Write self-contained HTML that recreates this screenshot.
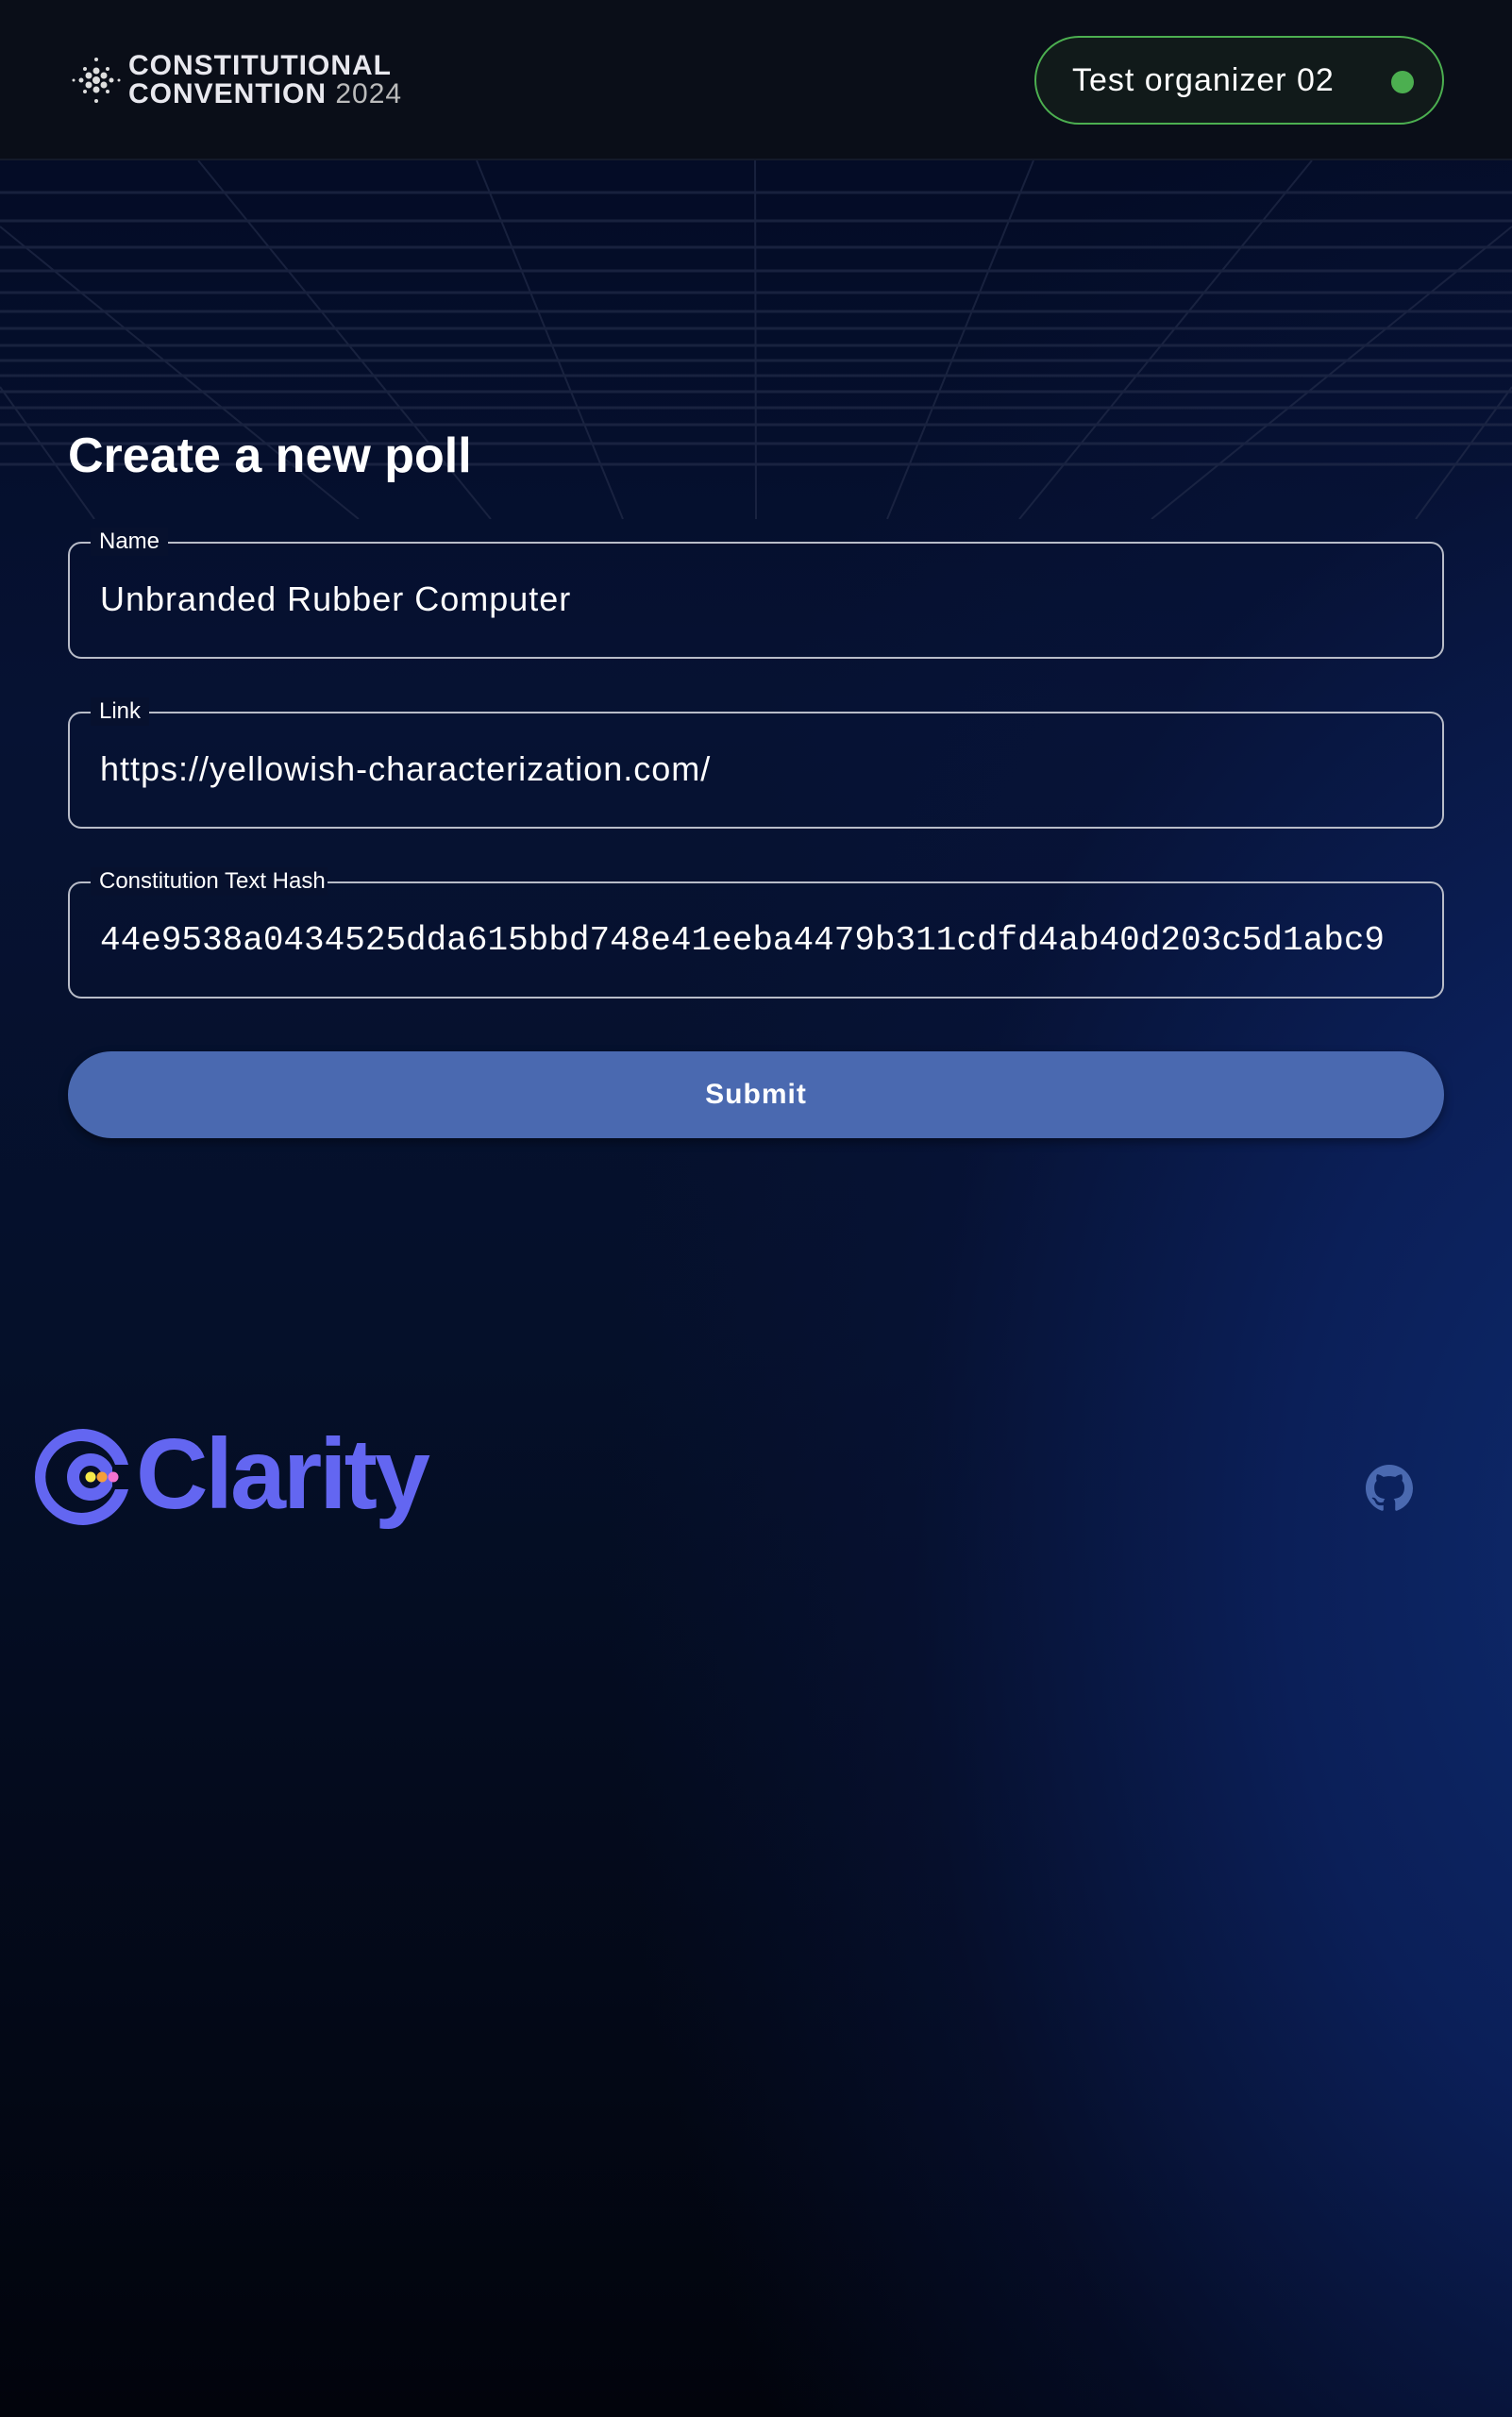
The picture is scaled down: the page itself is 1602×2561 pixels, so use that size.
<!DOCTYPE html>
<html><head><meta charset="utf-8"><style>
*{margin:0;padding:0;box-sizing:border-box}
html,body{width:1602px;height:2561px;overflow:hidden}
body{font-family:"Liberation Sans",sans-serif;color:#fff;position:relative;
background:
radial-gradient(ellipse 1300px 2000px at 1750px 1650px,#0e2a6c 0%,#0b1f58 30%,rgba(8,20,60,.5) 60%,rgba(5,10,30,0) 85%),
linear-gradient(180deg,#030a22 0%,#061233 30%,#05102a 55%,#02040c 100%);}
.hdr{position:absolute;left:0;top:0;width:1602px;height:170px;background:#0a0e18;border-bottom:2px solid #141a2a}
.grid{position:absolute;left:0;top:170px;width:1602px;height:380px;opacity:.55}
.logo{position:absolute;left:72px;top:55px}
.logo .t{position:absolute;left:64px;top:0;font-weight:bold;font-size:30px;line-height:30px;letter-spacing:1px;color:#e8e8ee;white-space:nowrap}
.logo .t span{font-weight:normal;color:#bbb}
.pill{position:absolute;left:1096px;top:38px;width:434px;height:94px;border:2px solid #4caf50;border-radius:47px;background:#111a1a;font-size:34px;line-height:90px;padding-left:38px;letter-spacing:1px}
.pill i{position:absolute;right:30px;top:35px;width:24px;height:24px;border-radius:50%;background:#4caf50}
h1{position:absolute;left:72px;top:453px;font-size:52px;font-weight:bold}
.f{position:absolute;left:72px;width:1458px;height:124px;border:2px solid #b8bcc8;border-radius:14px}
.f label{position:absolute;left:22px;top:-17px;font-size:24px;padding:0 9px;line-height:30px;background:#07112e}
.f div{position:absolute;left:32px;top:38px;font-size:36px;letter-spacing:1px;white-space:nowrap}
.f div.m{font-family:"Liberation Mono",monospace;letter-spacing:0;font-size:36px;top:40px}
.btn{position:absolute;left:72px;top:1114px;width:1458px;height:92px;border-radius:46px;background:#4a69b0;text-align:center;line-height:92px;font-size:30px;font-weight:bold;letter-spacing:1px;box-shadow:0 4px 10px rgba(0,0,0,.4)}
.cl{position:absolute;left:36px;top:1510px}
.cl .w{position:absolute;left:108px;top:-8px;font-size:106px;font-weight:bold;color:#6366f1;letter-spacing:-3px}
</style></head><body>
<div class="hdr">
<div class="logo">
<svg width="60" height="60" viewBox="0 0 60 60" style="position:absolute;left:0;top:0">
<g fill="#ddd"><circle cx="30" cy="30" r="4"/><circle cx="22" cy="25" r="3.5"/><circle cx="38" cy="25" r="3.5"/><circle cx="22" cy="35" r="3.5"/><circle cx="38" cy="35" r="3.5"/><circle cx="30" cy="20" r="3.5"/><circle cx="30" cy="40" r="3.5"/><circle cx="14" cy="30" r="2.5"/><circle cx="46" cy="30" r="2.5"/><circle cx="18" cy="18" r="2"/><circle cx="42" cy="18" r="2"/><circle cx="18" cy="42" r="2"/><circle cx="42" cy="42" r="2"/><circle cx="30" cy="8" r="2"/><circle cx="30" cy="52" r="2"/><circle cx="6" cy="30" r="1.5"/><circle cx="54" cy="30" r="1.5"/></g></svg>
<div class="t">CONSTITUTIONAL<br>CONVENTION <span>2024</span></div>
</div>
<div class="pill">Test organizer 02<i></i></div>
</div>
<svg class="grid" viewBox="0 0 1602 380" preserveAspectRatio="none">
<g stroke="#2a3350" stroke-width="3" fill="none">
<line x1="0" y1="34" x2="1602" y2="34"/><line x1="0" y1="64" x2="1602" y2="64"/><line x1="0" y1="92" x2="1602" y2="92"/><line x1="0" y1="117" x2="1602" y2="117"/><line x1="0" y1="140" x2="1602" y2="140"/><line x1="0" y1="160" x2="1602" y2="160"/><line x1="0" y1="178" x2="1602" y2="178"/><line x1="0" y1="196" x2="1602" y2="196"/><line x1="0" y1="212" x2="1602" y2="212"/><line x1="0" y1="228" x2="1602" y2="228"/><line x1="0" y1="245" x2="1602" y2="245"/><line x1="0" y1="262" x2="1602" y2="262"/><line x1="0" y1="280" x2="1602" y2="280"/><line x1="0" y1="300" x2="1602" y2="300"/><line x1="0" y1="322" x2="1602" y2="322"/>
</g>
<g stroke="#2a3350" stroke-width="2" fill="none">
<line x1="210" y1="0" x2="520" y2="380"/><line x1="505" y1="0" x2="660" y2="380"/><line x1="800" y1="0" x2="801" y2="380"/><line x1="1095" y1="0" x2="940" y2="380"/><line x1="1390" y1="0" x2="1080" y2="380"/><line x1="0" y1="70" x2="380" y2="380"/><line x1="1602" y1="70" x2="1220" y2="380"/><line x1="0" y1="240" x2="100" y2="380"/><line x1="1602" y1="240" x2="1500" y2="380"/>
</g></svg>
<h1>Create a new poll</h1>
<div class="f" style="top:574px"><label>Name</label><div>Unbranded Rubber Computer</div></div>
<div class="f" style="top:754px"><label>Link</label><div>https://yellowish-characterization.com/</div></div>
<div class="f" style="top:934px"><label style="padding-right:2px">Constitution Text Hash</label><div class="m">44e9538a0434525dda615bbd748e41eeba4479b311cdfd4ab40d203c5d1abc9</div></div>
<div class="btn">Submit</div>
<div class="cl">
<svg width="110" height="110" viewBox="0 0 110 110">
<path d="M52 4A51 51 0 1 0 52 106A51 51 0 0 0 100 68L86 68A38 38 0 1 1 86 42L100 42A51 51 0 0 0 52 4Z" fill="#6366f1"/>
<path d="M60 30A25 25 0 0 1 83 45L83 65A25 25 0 0 1 60 80A25 25 0 0 1 60 30Z" fill="#6366f1"/>
<circle cx="60" cy="55" r="12" fill="#070e28"/>
<circle cx="60" cy="55" r="5.5" fill="#f5e94a"/><circle cx="72" cy="55" r="5.5" fill="#f59e3a"/><circle cx="84" cy="55" r="5.5" fill="#f472d0"/>
</svg>
<div class="w">Clarity</div>
</div>
<svg style="position:absolute;left:1447px;top:1552px" width="50" height="50" viewBox="0 0 16 16"><path fill="#4a69b0" d="M8 0C3.580 0 0 3.58 0 8c0 3.54 2.29 6.53 5.47 7.59.4.07.55-.17.55-.38 0-.19-.01-.82-.01-1.49-2.01.37-2.530-.49-2.69-.94-.09-.23-.48-.94-.82-1.13-.28-.15-.68-.52-.01-.53.63-.01 1.08.58 1.23.82.72 1.21 1.870.87 2.33.66.07-.52.28-.87.51-1.07-1.78-.2-3.64-.89-3.64-3.95 0-.87.31-1.59.82-2.15-.08-.2-.36-1.02.08-2.12 0 0 .67-.21 2.2.82.64-.18 1.32-.27 2-.27.68 0 1.36.09 2 .27 1.53-1.04 2.2-.82 2.2-.82.44 1.1.16 1.92.08 2.12.51.56.82 1.27.82 2.15 0 3.07-1.87 3.75-3.65 3.95.29.25.54.73.54 1.48 0 1.070-.01 1.93-.01 2.2 0 .21.15.46.55.38A8.013 8.013 0 0016 8c0-4.42-3.58-8-8-8z"/></svg>
</body></html>
